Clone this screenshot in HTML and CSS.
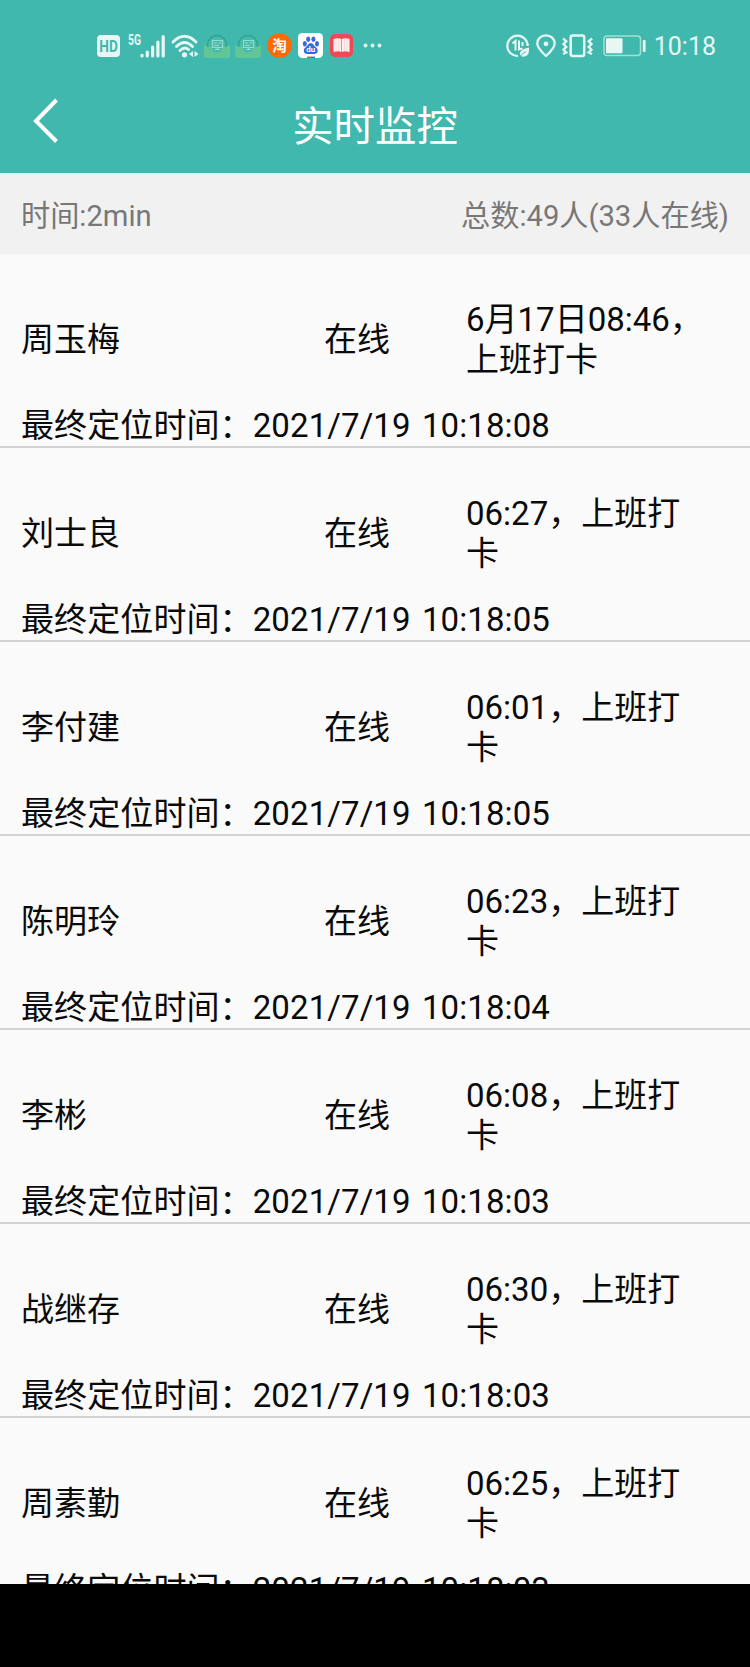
FILE: index.html
```
<!DOCTYPE html>
<html lang="zh-CN">
<head>
    <meta charset="UTF-8">
    <meta name="viewport" content="width=device-width, initial-scale=1.0">
    <title>实时监控</title>
    <link rel="stylesheet" href="styles.css">
</head>
<body>
    <header class="header">
        <div class="status-bar">
            <div class="status-left">
                <svg class="icon-hd" width="23" height="22" viewBox="0 0 23 22">
                    <rect width="23" height="22" rx="4" fill="#e8f7f4"/>
                    <text x="11.5" y="16.8" font-size="16" font-weight="bold" text-anchor="middle" textLength="18.5" lengthAdjust="spacingAndGlyphs" fill="#40b8ad">HD</text>
                </svg>
                <svg class="icon-signal" width="38" height="24" viewBox="0 0 38 24">
                    <text x="0" y="11" font-size="14.5" font-weight="bold" textLength="13" lengthAdjust="spacingAndGlyphs" fill="#e8f7f4">5G</text>
                    <g stroke="#e8f7f4" stroke-width="3.2" stroke-linecap="round">
                        <path d="M14 21.3v.7M19.3 18v4M24.6 13v9M29.9 8v14M35.2 2.500v19.500"/>
                    </g>
                </svg>
                <svg class="icon-wifi" width="28" height="24" viewBox="0 0 28 24">
                    <g fill="none" stroke="#e8f7f4" stroke-width="2.900" stroke-linecap="round">
                        <path d="M2 8Q13.500-3.500 25 8M5.500 12.500Q13.500 4.500 21.500 12.500M9 16.500Q13.500 12 17.500 15.500"/>
                    </g>
                    <circle cx="13.500" cy="20.800" r="2.600" fill="#e8f7f4"/>
                    <path d="M22 17v6l-4-3zM23.500 17v6l4-3z" fill="#e8f7f4"/>
                </svg>
                <svg class="icon-app" width="26" height="24" viewBox="0 0 26 24">
                    <circle cx="13" cy="11" r="9.500" fill="#49b9ab" stroke="#2ba590" stroke-width="1.500"/>
                    <path d="M0 11l4 2 3-1q1.500 7 6 7t6-7l3 1 4-2v11q0 2-2 2H2q-2 0-2-2z" fill="#61c596"/>
                    <path d="M8.500 6.500h10v7h-10zM11 15.500h5M13.500 13.500v2" fill="none" stroke="#91dccf" stroke-width="1.200"/>
                    <path d="M10 9h3M14.500 9h2.500M10 11.500h5" stroke="#91dccf"/>
                </svg>
                <svg class="icon-app" width="26" height="24" viewBox="0 0 26 24">
                    <circle cx="13" cy="11" r="9.500" fill="#49b9ab" stroke="#2ba590" stroke-width="1.500"/>
                    <path d="M0 11l4 2 3-1q1.500 7 6 7t6-7l3 1 4-2v11q0 2-2 2H2q-2 0-2-2z" fill="#61c596"/>
                    <path d="M8.500 6.500h10v7h-10zM11 15.500h5M13.500 13.500v2" fill="none" stroke="#91dccf" stroke-width="1.200"/>
                    <path d="M10 9h3M14.500 9h2.500M10 11.500h5" stroke="#91dccf"/>
                </svg>
                <svg class="icon-taobao" width="25" height="25" viewBox="0 0 25 25">
                    <circle cx="12.500" cy="12.500" r="12.300" fill="#ff6a00"/>
                    <text x="12.500" y="17.800" font-size="14.500" font-weight="bold" text-anchor="middle" fill="#fff">淘</text>
                </svg>
                <svg class="icon-baidu" width="25" height="25" viewBox="0 0 25 25">
                    <rect width="25" height="25" rx="4.500" fill="#fff"/>
                    <g fill="#3569dc">
                        <ellipse cx="6.800" cy="10.800" rx="2" ry="2.700"/>
                        <ellipse cx="10.200" cy="6.300" rx="2" ry="2.700"/>
                        <ellipse cx="15.400" cy="6.300" rx="2" ry="2.700"/>
                        <ellipse cx="19" cy="10.800" rx="2" ry="2.700"/>
                        <path d="M12.800 10q2.200 0 3.500 2.700l3 3q1.600 5-3 5.300H9.200q-4.600-.3-3-5.300l3-3Q10.600 10 12.800 10z"/>
                    </g>
                    <text x="12.800" y="19" font-size="8" font-weight="bold" text-anchor="middle" fill="#fff">du</text>
                    <path d="M9 24.300h4" stroke="#e34b4b" stroke-width="1.400"/>
                    <path d="M13 24.300h4" stroke="#3569dc" stroke-width="1.400"/>
                </svg>
                <svg class="icon-book" width="23" height="23" viewBox="0 0 23 23">
                    <rect width="23" height="23" rx="5" fill="#f04855"/>
                    <path d="M3.500 5q4.500-1.500 7.700 0v13q-3.200-1.500-7.700 0zM11.800 5q3.200-1.500 7.700 0v13q-4.500-1.500-7.700 0z" fill="#fff0f0"/>
                    <path d="M6 5v12M8.500 5v12M14.500 5v12M17 5v12" stroke="#fad0d2" stroke-width=".7"/>
                </svg>
                <svg class="icon-more" width="19" height="5" viewBox="0 0 19 5">
                    <g fill="#e8f7f4">
                        <circle cx="2.500" cy="2.500" r="1.900"/>
                        <circle cx="9.500" cy="2.500" r="1.900"/>
                        <circle cx="16.500" cy="2.500" r="1.900"/>
                    </g>
                </svg>
            </div>
            <div class="status-right">
                <svg class="icon-data" width="24" height="24" viewBox="0 0 24 24">
                    <path d="M12 22A10.200 10.200 0 1 1 21.700 12" fill="none" stroke="#e8f7f4" stroke-width="2.200"/>
                    <path d="M6.500 9.500l3-2.500v9.500M13 6.500v9l3.500-1M16.500 8v4" fill="none" stroke="#e8f7f4" stroke-width="2"/>
                    <path d="M23 13.500q1 9-5.500 9.300-3.700-.3-3.700-3.600 1-4.200 9.200-5.700z" fill="#e8f7f4"/>
                    <path d="M13.500 23.500q3-4.500 6.500-6" fill="none" stroke="#40b8ad" stroke-width=".9"/>
                </svg>
                <svg class="icon-pin" width="20" height="24" viewBox="0 0 20 24">
                    <path d="M10 22Q1.300 14 1.300 9.500a8.700 8.200 0 0 1 17.400 0Q18.700 14 10 22z" fill="none" stroke="#e8f7f4" stroke-width="2.300" stroke-linejoin="round"/>
                    <circle cx="10" cy="9.800" r="2.400" fill="#e8f7f4"/>
                </svg>
                <svg class="icon-vibrate" width="31" height="24" viewBox="0 0 31 24">
                    <rect x="8.700" y="1.500" width="13.500" height="20.500" rx="2" fill="none" stroke="#e8f7f4" stroke-width="2.500"/>
                    <path d="M1 4.500l3.300 2.800-2.800 2.800 2.800 2.800-2.800 2.800 2.800 2.800L1 20M30 4.500l-3.300 2.800 2.800 2.800-2.800 2.800 2.800 2.800-2.800 2.800L30 20" fill="none" stroke="#e8f7f4" stroke-width="2.300"/>
                </svg>
                <svg class="icon-battery" width="43" height="22" viewBox="0 0 43 22">
                    <rect x="1" y="1" width="36.500" height="19.500" rx="3" fill="none" stroke="#a3e0d5" stroke-width="1.500"/>
                    <rect x="3" y="3.300" width="16.500" height="15" rx="1" fill="#e8f7f4"/>
                    <rect x="39.800" y="5" width="2.800" height="12" rx="1" fill="#e8f7f4"/>
                </svg>
                <span class="clock">10:18</span>
            </div>
        </div>
        <div class="title-bar">
            <svg class="back" width="26" height="46" viewBox="0 0 26 46">
                <path d="M24.500 2L4 23L24.500 43.500" fill="none" stroke="#fff" stroke-width="4"/>
            </svg>
            <h1 class="title">实时监控</h1>
        </div>
    </header>

    <div class="summary">
        <span>时间:2min</span>
        <span>总数:49人(33人在线)</span>
    </div>

    <main class="list">
        <div class="item">
            <div class="item-row">
                <span class="name">周玉梅</span>
                <span class="state">在线</span>
                <span class="punch">6月17日08:46，上班打卡</span>
            </div>
            <p class="located">最终定位时间：2021/7/19 10:18:08</p>
        </div>
        <div class="item">
            <div class="item-row">
                <span class="name">刘士良</span>
                <span class="state">在线</span>
                <span class="punch">06:27，上班打卡</span>
            </div>
            <p class="located">最终定位时间：2021/7/19 10:18:05</p>
        </div>
        <div class="item">
            <div class="item-row">
                <span class="name">李付建</span>
                <span class="state">在线</span>
                <span class="punch">06:01，上班打卡</span>
            </div>
            <p class="located">最终定位时间：2021/7/19 10:18:05</p>
        </div>
        <div class="item">
            <div class="item-row">
                <span class="name">陈明玲</span>
                <span class="state">在线</span>
                <span class="punch">06:23，上班打卡</span>
            </div>
            <p class="located">最终定位时间：2021/7/19 10:18:04</p>
        </div>
        <div class="item">
            <div class="item-row">
                <span class="name">李彬</span>
                <span class="state">在线</span>
                <span class="punch">06:08，上班打卡</span>
            </div>
            <p class="located">最终定位时间：2021/7/19 10:18:03</p>
        </div>
        <div class="item">
            <div class="item-row">
                <span class="name">战继存</span>
                <span class="state">在线</span>
                <span class="punch">06:30，上班打卡</span>
            </div>
            <p class="located">最终定位时间：2021/7/19 10:18:03</p>
        </div>
        <div class="item">
            <div class="item-row">
                <span class="name">周素勤</span>
                <span class="state">在线</span>
                <span class="punch">06:25，上班打卡</span>
            </div>
            <p class="located">最终定位时间：2021/7/19 10:18:03</p>
        </div>
    </main>

    <div class="nav-area"></div>
</body>
</html>
```

FILE: styles.css
```
* {
    box-sizing: border-box;
}

body {
    display: flex;
    flex-direction: column;
    width: 750px;
    height: 1667px;
    margin: 0;
    overflow: hidden;
    font-family: Roboto, "Noto Sans CJK SC", sans-serif;
    background-color: #fafafa;
    color: #0a0a0a;
}

svg {
    display: block;
    flex-shrink: 0;
    overflow: visible;
}

.header {
    flex-shrink: 0;
    height: 173px;
    background-color: #40b8ad;
    color: #fff;
}

/* Barra de status do celular */
.status-bar {
    display: flex;
    justify-content: space-between;
    align-items: center;
    height: 91px;
    padding: 0 34px 0 97px;
}

.status-left,
.status-right {
    display: flex;
    align-items: center;
}

.icon-signal {
    margin-left: 8px;
}

.icon-wifi {
    margin-left: 5px;
}

.icon-app {
    margin-left: 5px;
}

.icon-taobao {
    margin-left: 6px;
}

.icon-baidu {
    margin-left: 6px;
}

.icon-book {
    margin-left: 7px;
}

.icon-more {
    margin-left: 10px;
}

.icon-pin {
    margin-left: 6px;
}

.icon-vibrate {
    margin-left: 6px;
}

.icon-battery {
    margin-left: 10px;
}

.clock {
    margin-left: 8px;
    padding-top: 2px;
    font-size: 25px;
    line-height: 30px;
    color: #e8f7f4;
}

.title-bar {
    display: grid;
    grid-template-columns: 1fr auto 1fr;
    align-items: start;
    padding: 7px 32px 0;
}

.title {
    margin: 0;
    padding-top: 1px;
    font-size: 41.4px;
    font-weight: 400;
    line-height: 56px;
}

.summary {
    display: flex;
    flex-shrink: 0;
    justify-content: space-between;
    align-items: center;
    height: 81px;
    padding: 0 21px 2px;
    font-size: 29.2px;
    background-color: #f1f1f1;
    color: #777;
}

.list {
    flex: 1;
    min-height: 0;
    overflow: hidden;
    font-size: 33px;
    line-height: 40px;
}

.item {
    height: 194px;
    padding: 46px 21px 0;
    border-bottom: 2px solid #d2d2d2;
}

.item-row {
    display: flex;
    align-items: center;
    height: 80px;
}

.name {
    width: 303px;
}

.state {
    width: 142px;
}

.punch {
    width: 242px;
}

.located {
    margin: 26px 0 0;
    letter-spacing: 0.1px;
    word-spacing: 3px;
    white-space: nowrap;
}

/* Área preta de navegação */
.nav-area {
    flex-shrink: 0;
    height: 83px;
    background-color: #000;
}
```
